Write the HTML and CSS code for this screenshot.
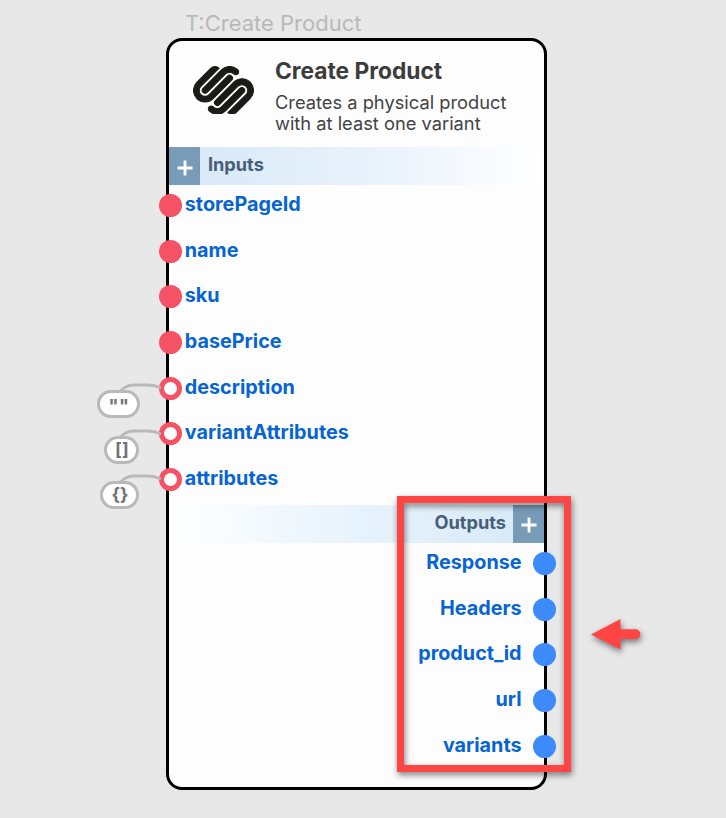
FILE: index.html
```html
<!DOCTYPE html>
<html lang="en">
<head>
<meta charset="utf-8">
<title>Create Product</title>
<link rel="stylesheet" href="styles.css">
</head>
<body>
<main class="canvas">
  <div class="node-label">T:Create Product</div>
  <section class="node">
    <header class="head">
      <svg class="logo" viewBox="-.15 2.25 24.3 19.5"><path d="M22.655 8.719c-1.802-1.801-4.726-1.801-6.564 0l-7.351 7.35c-.45.45-.45 1.2 0 1.65.45.449 1.2.449 1.65 0l7.351-7.351c.899-.899 2.362-.899 3.264 0 .9.9.9 2.364 0 3.264l-7.239 7.239c.9.899 2.362.899 3.263 0l5.589-5.589c1.836-1.838 1.836-4.763.037-6.563zm-2.475 2.437c-.451-.45-1.201-.45-1.65 0l-7.354 7.389c-.9.899-2.361.899-3.262 0-.45-.45-1.201-.45-1.651 0-.45.449-.45 1.199 0 1.649 1.801 1.801 4.726 1.801 6.564 0l7.351-7.35c.449-.487.449-1.239.002-1.688z"/><path transform="rotate(180 12 12)" d="M22.655 8.719c-1.802-1.801-4.726-1.801-6.564 0l-7.351 7.35c-.45.45-.45 1.2 0 1.65.45.449 1.2.449 1.65 0l7.351-7.351c.899-.899 2.362-.899 3.264 0 .9.9.9 2.364 0 3.264l-7.239 7.239c.9.899 2.362.899 3.263 0l5.589-5.589c1.836-1.838 1.836-4.763.037-6.563zm-2.475 2.437c-.451-.45-1.201-.45-1.65 0l-7.354 7.389c-.9.899-2.361.899-3.262 0-.45-.45-1.201-.45-1.651 0-.45.449-.45 1.199 0 1.649 1.801 1.801 4.726 1.801 6.564 0l7.351-7.35c.449-.487.449-1.239.002-1.688z"/></svg>
      <div class="heading">
        <h1>Create Product</h1>
        <p>Creates a physical product<br>with at least one variant</p>
      </div>
    </header>
    <div class="bar bar-in">
      <span class="add"><svg viewBox="0 0 16 16"><path d="M8 .5v15M.5 8h15"/></svg></span>
      <span class="bar-title">Inputs</span>
    </div>
    <ul class="ports inputs">
      <li><i class="dot"></i><span>storePageId</span></li>
      <li><i class="dot"></i><span>name</span></li>
      <li><i class="dot"></i><span>sku</span></li>
      <li><i class="dot"></i><span>basePrice</span></li>
      <li><i class="dot open"></i><span>description</span>
        <div class="default"><svg class="wire" viewBox="0 0 50 16"><path d="M5 14Q13 3 22 3H37Q44 3 50 6"/></svg><b class="pill w-lg">""</b></div></li>
      <li><i class="dot open"></i><span>variantAttributes</span>
        <div class="default"><svg class="wire" viewBox="0 0 50 16"><path d="M5 14Q13 3 22 3H37Q44 3 50 6"/></svg><b class="pill w-sm">[]</b></div></li>
      <li><i class="dot open"></i><span>attributes</span>
        <div class="default"><svg class="wire" viewBox="0 0 50 16"><path d="M5 14Q13 3 22 3H37Q44 3 50 6"/></svg><b class="pill w-md">{}</b></div></li>
    </ul>
    <div class="bar bar-out">
      <span class="bar-title">Outputs</span>
      <span class="add"><svg viewBox="0 0 16 16"><path d="M8 .5v15M.5 8h15"/></svg></span>
    </div>
    <ul class="ports outputs">
      <li><span>Response</span><i class="dot"></i></li>
      <li><span>Headers</span><i class="dot"></i></li>
      <li><span>product_id</span><i class="dot"></i></li>
      <li><span>url</span><i class="dot"></i></li>
      <li><span>variants</span><i class="dot"></i></li>
    </ul>
  </section>
  <div class="highlight"></div>
  <svg class="arrow" viewBox="0 0 50 32"><path d="M0 15.5 29.5 0V10.2H44.5a4.9 4.9 0 0 1 0 9.8H29.5V30.5Z"/></svg>
</main>
</body>
</html>
```
FILE: styles.css
```css
* { box-sizing: border-box; }
body { margin: 0; background: #e8e8e8; font-family: Inter, "Liberation Sans", sans-serif; }
.canvas { position: relative; width: 726px; height: 818px; overflow: hidden; padding: 9px 0 0 166.4px; }
.node-label { height: 28.5px; padding-left: 18.6px; font-size: 22px; line-height: 28px; color: #b9b9b9; white-space: nowrap; }
.node { width: 380.6px; height: 752px; border: 3px solid #000; border-radius: 16px; background: #fdfdfd; }
.head { display: flex; height: 106.5px; padding: 25px 0 0 23.6px; }
.logo { width: 61px; height: 48.8px; flex: none; fill: #1b1a19; stroke: #1b1a19; stroke-width: .4; }
.heading { margin: -8px 0 0 21px; color: #3c3c3c; white-space: nowrap; }
h1 { margin: 0; font-size: 22.75px; line-height: 26px; font-weight: 700; }
p { margin: 8px 0 0; font-size: 18.3px; line-height: 21px; color: #434343; }
.bar { display: flex; height: 38px; color: #475e78; font-size: 18.2px; font-weight: 700; line-height: 35px; }
.bar-in { background: linear-gradient(90deg, #d6e8f7, #e7f1fb 50%, #fff); }
.bar-out { justify-content: flex-end; background: linear-gradient(270deg, #d6e8f7, #e7f3fc 50%, #fff); }
.bar-title { padding: 0 7.5px 0 8px; }
.add { display: flex; align-items: center; justify-content: center; width: 30.5px; background: #789bb7; }
.add svg { width: 16px; height: 16px; margin-top: 3px; }
.add path { stroke: #fff; stroke-width: 2.8; }
.ports { margin: 0; padding: 0; list-style: none; color: #0664d3; font-size: 19.8px; font-weight: 700; }
.ports li { display: flex; align-items: center; height: 45.67px; position: relative; }
.inputs { height: 322px; margin-top: -2.2px; }
.ports span { position: relative; top: -1.6px; line-height: 24px; }
.dot { width: 23px; height: 23px; border-radius: 50%; flex: none; }
.inputs .dot { margin: 0 3.2px 0 -10.8px; background: #f65265; }
.inputs .open { background: #fff; border: 5px solid #f65265; }
.outputs { margin-top: -2px; }
.outputs li { justify-content: flex-end; }
.outputs .dot { margin: 0 -12px 0 11.4px; background: #3d8bfb; }
.default { position: absolute; left: -72px; top: 16.5px; width: 61px; }
.wire { position: absolute; left: 14px; top: 0; width: 50px; height: 16px; fill: none; stroke: #b9b9b9; stroke-width: 2.8; }
.pill { display: block; position: relative; margin-top: 8px; height: 28px; border: 3px solid #b9b9b9; border-radius: 14px; background: #fff; color: #727272; text-align: center; font-size: 18px; font-weight: 700; line-height: 22px; }
.w-lg { width: 43px; letter-spacing: .5px; line-height: 25px; }
.w-md { width: 39px; margin-left: 3px; }
.w-sm { width: 35px; margin-left: 7px; }
.highlight { position: absolute; left: 397px; top: 496px; width: 174px; height: 276px; border: 7px solid #ff4444; filter: drop-shadow(1px 3px 3px rgba(0,0,0,.5)); }
.arrow { position: absolute; left: 591.3px; top: 619px; width: 50px; height: 32px; overflow: visible; fill: #ff4444; filter: drop-shadow(1px 3px 3px rgba(0,0,0,.5)); }
```
